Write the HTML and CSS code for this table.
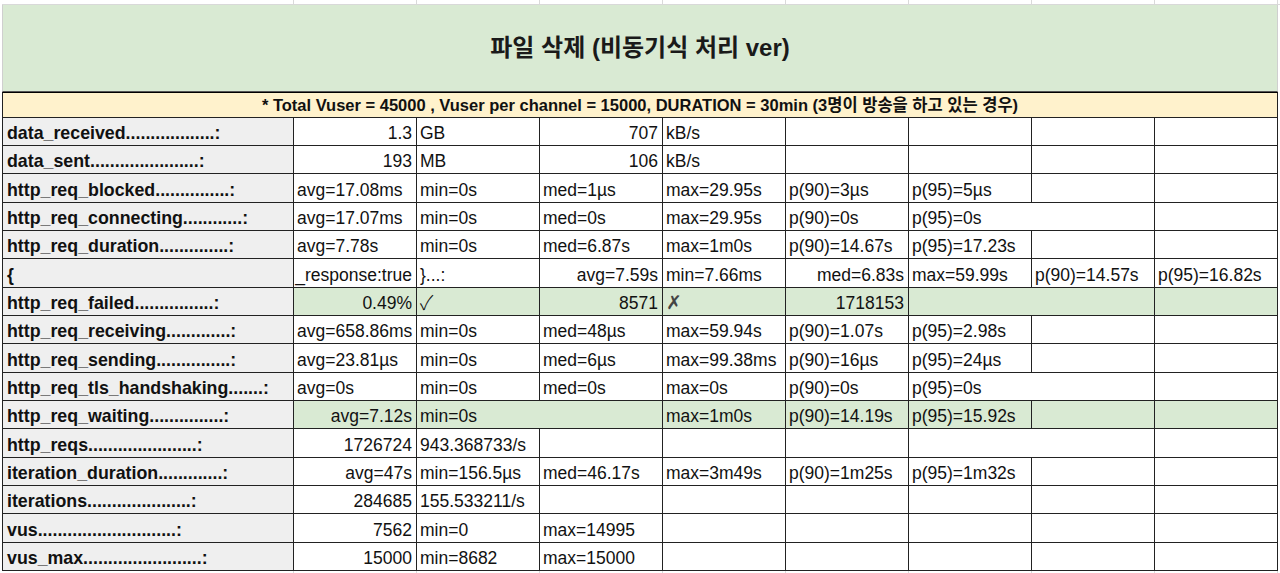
FILE: index.html
```html
<!DOCTYPE html>
<html lang="ko">
<head>
<meta charset="utf-8">
<title>파일 삭제 (비동기식 처리 ver)</title>
<link rel="stylesheet" href="styles.css">
</head>
<body>
<div class="sheet">
  <div class="strip">
    <span></span><span></span><span></span><span></span><span></span><span></span><span></span><span></span><span></span>
  </div>
  <div class="grid">
    <div class="c title span9">파일 삭제 (비동기식 처리 ver)</div>
    <div class="c note span9">* Total Vuser = 45000 , Vuser per channel = 15000, DURATION = 30min (3명이 방송을 하고 있는 경우)</div>
  </div>
  <div class="grid rows">
    <div class="c lbl">data_received..................:</div>
    <div class="c r">1.3</div><div class="c">GB</div><div class="c r">707</div><div class="c">kB/s</div>
    <div class="c"></div><div class="c"></div><div class="c"></div><div class="c"></div>

    <div class="c lbl">data_sent......................:</div>
    <div class="c r">193</div><div class="c">MB</div><div class="c r">106</div><div class="c">kB/s</div>
    <div class="c"></div><div class="c"></div><div class="c"></div><div class="c"></div>

    <div class="c lbl">http_req_blocked...............:</div>
    <div class="c">avg=17.08ms</div><div class="c">min=0s</div><div class="c">med=1µs</div><div class="c">max=29.95s</div>
    <div class="c">p(90)=3µs</div><div class="c">p(95)=5µs</div><div class="c"></div><div class="c"></div>

    <div class="c lbl">http_req_connecting............:</div>
    <div class="c">avg=17.07ms</div><div class="c">min=0s</div><div class="c">med=0s</div><div class="c">max=29.95s</div>
    <div class="c">p(90)=0s</div><div class="c span2">p(95)=0s</div><div class="c"></div>

    <div class="c lbl">http_req_duration..............:</div>
    <div class="c">avg=7.78s</div><div class="c">min=0s</div><div class="c">med=6.87s</div><div class="c">max=1m0s</div>
    <div class="c">p(90)=14.67s</div><div class="c">p(95)=17.23s</div><div class="c"></div><div class="c"></div>

    <div class="c lbl">{</div>
    <div class="c r clip">_response:true</div><div class="c">}...:</div><div class="c r">avg=7.59s</div><div class="c">min=7.66ms</div>
    <div class="c r">med=6.83s</div><div class="c">max=59.99s</div><div class="c">p(90)=14.57s</div><div class="c">p(95)=16.82s</div>

    <div class="c lbl">http_req_failed................:</div>
    <div class="c r g">0.49%</div><div class="c g sym">✓</div><div class="c r g">8571</div><div class="c g sym cross">✗</div>
    <div class="c r g">1718153</div><div class="c g span2"></div><div class="c g"></div>

    <div class="c lbl">http_req_receiving.............:</div>
    <div class="c">avg=658.86ms</div><div class="c">min=0s</div><div class="c">med=48µs</div><div class="c">max=59.94s</div>
    <div class="c">p(90)=1.07s</div><div class="c">p(95)=2.98s</div><div class="c"></div><div class="c"></div>

    <div class="c lbl">http_req_sending...............:</div>
    <div class="c">avg=23.81µs</div><div class="c">min=0s</div><div class="c">med=6µs</div><div class="c">max=99.38ms</div>
    <div class="c">p(90)=16µs</div><div class="c">p(95)=24µs</div><div class="c"></div><div class="c"></div>

    <div class="c lbl">http_req_tls_handshaking.......:</div>
    <div class="c">avg=0s</div><div class="c">min=0s</div><div class="c">med=0s</div><div class="c">max=0s</div>
    <div class="c">p(90)=0s</div><div class="c span2">p(95)=0s</div><div class="c"></div>

    <div class="c lbl">http_req_waiting...............:</div>
    <div class="c r g">avg=7.12s</div><div class="c g span2">min=0s</div><div class="c g">max=1m0s</div>
    <div class="c g">p(90)=14.19s</div><div class="c g">p(95)=15.92s</div><div class="c g"></div><div class="c g"></div>

    <div class="c lbl">http_reqs......................:</div>
    <div class="c r">1726724</div><div class="c">943.368733/s</div><div class="c"></div><div class="c"></div>
    <div class="c"></div><div class="c span2"></div><div class="c"></div>

    <div class="c lbl">iteration_duration.............:</div>
    <div class="c r">avg=47s</div><div class="c">min=156.5µs</div><div class="c">med=46.17s</div><div class="c">max=3m49s</div>
    <div class="c">p(90)=1m25s</div><div class="c">p(95)=1m32s</div><div class="c"></div><div class="c"></div>

    <div class="c lbl">iterations.....................:</div>
    <div class="c r">284685</div><div class="c">155.533211/s</div><div class="c"></div><div class="c"></div>
    <div class="c"></div><div class="c"></div><div class="c"></div><div class="c"></div>

    <div class="c lbl">vus............................:</div>
    <div class="c r">7562</div><div class="c">min=0</div><div class="c">max=14995</div><div class="c"></div>
    <div class="c"></div><div class="c"></div><div class="c"></div><div class="c"></div>

    <div class="c lbl">vus_max........................:</div>
    <div class="c r">15000</div><div class="c">min=8682</div><div class="c">max=15000</div><div class="c"></div>
    <div class="c"></div><div class="c"></div><div class="c"></div><div class="c"></div>
  </div>
  <div class="strip bottom">
    <span></span><span></span><span></span><span></span><span></span><span></span><span></span><span></span><span></span>
  </div>
</div>
</body>
</html>
```

FILE: styles.css
```css
* { box-sizing: border-box; }
html, body { margin: 0; padding: 0; background: #fff; }
body {
  font-family: "Liberation Sans", Arial, "Noto Sans CJK KR", sans-serif;
  color: #000;
  width: 1280px;
  height: 573px;
  overflow: hidden;
}
.sheet { padding-left: 2px; }

.strip {
  display: grid;
  grid-template-columns: 292px repeat(8, 123px);
  height: 5px;
  border-bottom: 1px solid #d9d9d9;
}
.strip span { border-right: 1px solid #dadada; }
.strip.bottom { border-bottom: none; height: 3px; }

.grid {
  display: grid;
  grid-template-columns: 292px repeat(8, 123px);
}
.rows {
  grid-template-rows: 28px 28px 29px 28px 28px 29px 28px 28px 29px 28px 28px 29px 28px 28px 29px 28px;
}

.c {
  display: flex;
  align-items: flex-end;
  justify-content: flex-start;
  font-size: 17.5px;
  line-height: 20px;
  padding: 0 4px 2px 3px;
  border-right: 1px solid #222;
  border-bottom: 1px solid #222;
  white-space: nowrap;
  overflow: hidden;
  min-width: 0;
  color: #111;
}
.c.r { justify-content: flex-end; }
.c.g { background: #d9ead3; }
.c.sym {
  font-family: "Noto Sans CJK KR", "DejaVu Sans", sans-serif;
  font-size: 20px;
  font-weight: 300;
  line-height: 20px;
  padding-bottom: 3px;
  overflow: visible;
}
.c.sym.cross {
  font-family: "DejaVu Sans", sans-serif;
  font-size: 19px;
  color: #444;
  padding-bottom: 3px;
}
.span2 { grid-column: span 2; }
.span9 { grid-column: span 9; }

.lbl {
  border-left: 1px solid #222;
  background: #efefef;
  font-weight: bold;
  font-size: 17.8px;
  padding-left: 4px;
}

.title {
  height: 87px;
  align-items: center;
  justify-content: center;
  background: #d9ead3;
  border-left: 1px solid #cfcfcf;
  border-right: 1px solid #cfcfcf;
  border-bottom: 1px solid #555;
  font-size: 24px;
  line-height: 30px;
  font-weight: bold;
  padding: 0;
  color: #1a1a1a;
}
.note {
  height: 26px;
  align-items: center;
  justify-content: center;
  background: #fff2cc;
  border-top: 1px solid #000;
  border-left: 1px solid #222;
  font-size: 16.5px;
  font-weight: bold;
  padding: 0 0 1px;
}
```
